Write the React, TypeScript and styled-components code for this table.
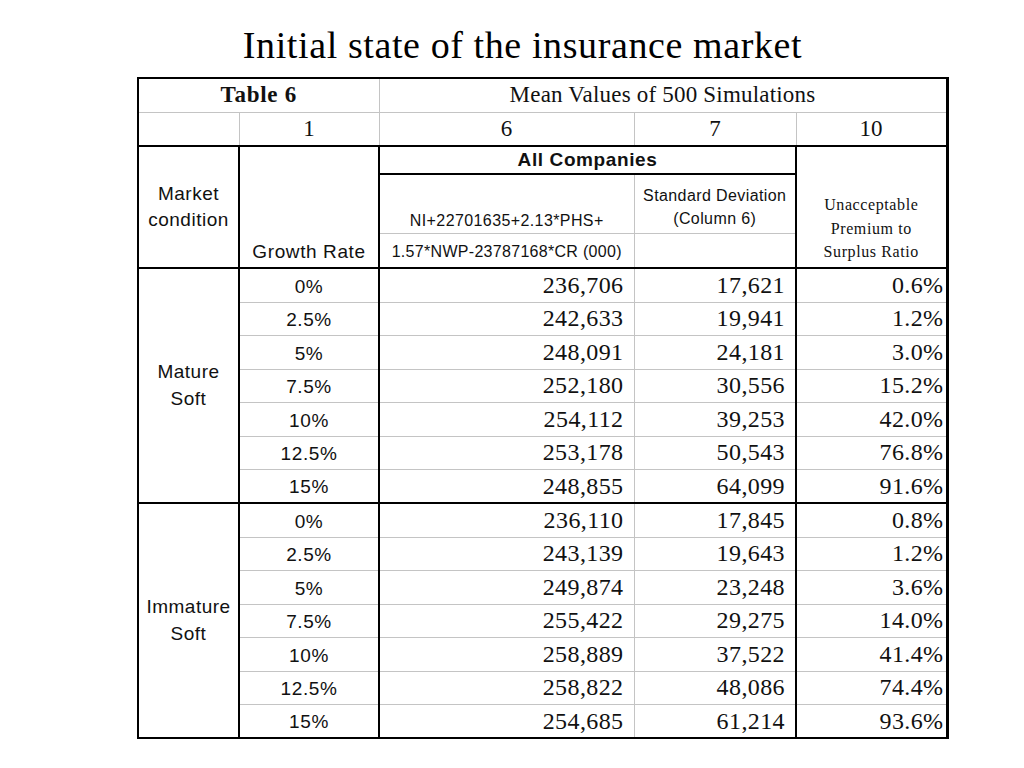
import React from "react";
import styled, { createGlobalStyle, css } from "styled-components";

const GlobalStyle = createGlobalStyle`
  html, body { margin: 0; padding: 0; background: #ffffff; }
  body { width: 1024px; height: 768px; overflow: hidden; }
`;

const Page = styled.main`
  display: flex;
  flex-direction: column;
  padding: 23px 0 0 0;
  width: 1024px;
  box-sizing: border-box;
`;

const Title = styled.h1`
  margin: 0 0 10px 0;
  padding-left: 21px;
  text-align: center;
  font-family: "Liberation Serif", "Times New Roman", serif;
  font-weight: normal;
  font-size: 38px;
  line-height: 44px;
  letter-spacing: 0.6px;
  color: #000;
`;

const Grid = styled.table`
  margin-left: 137px;
  width: 809px;
  border-collapse: collapse;
  table-layout: fixed;
  border-top: 2px solid #000;
  border-left: 2px solid #000;
  border-bottom: 2px solid #000;
  border-right: 3px solid #000;
  color: #111;
`;

const Row = styled.tr<{ $h: number }>`
  height: ${(p) => p.$h}px;
`;

type CellProps = {
  $font?: "serif" | "sans";
  $size?: number;
  $bold?: boolean;
  $align?: "left" | "center" | "right";
  $valign?: "top" | "middle" | "bottom";
  $pr?: number;
  $pb?: number;
  $ls?: number;
  $lh?: number;
  $tl?: boolean;
  $tr?: boolean;
  $tt?: boolean;
  $tb?: boolean;
};

const thick = "2px solid #000";

const Cell = styled.td<CellProps>`
  border: 1px solid #c4c4c4;
  padding: 0 ${(p) => p.$pr ?? 0}px ${(p) => p.$pb ?? 3}px 0;
  font-family: ${(p) =>
    p.$font === "sans"
      ? `"Liberation Sans", Arial, sans-serif`
      : `"Liberation Serif", "Times New Roman", serif`};
  font-size: ${(p) => p.$size ?? 24}px;
  font-weight: ${(p) => (p.$bold ? 700 : 400)};
  letter-spacing: ${(p) => p.$ls ?? 0}px;
  line-height: ${(p) => p.$lh ?? 1.1};
  text-align: ${(p) => p.$align ?? "center"};
  vertical-align: ${(p) => p.$valign ?? "bottom"};
  white-space: nowrap;
  ${(p) => p.$tl && css`border-left: ${thick};`}
  ${(p) => p.$tr && css`border-right: ${thick};`}
  ${(p) => p.$tt && css`border-top: ${thick};`}
  ${(p) => p.$tb && css`border-bottom: ${thick};`}
`;

const Stack = styled.div`
  display: flex;
  flex-direction: column;
  align-items: center;
`;

type DataRow = { g: string; a: string; b: string; c: string };

const mature: DataRow[] = [
  { g: "0%", a: "236,706", b: "17,621", c: "0.6%" },
  { g: "2.5%", a: "242,633", b: "19,941", c: "1.2%" },
  { g: "5%", a: "248,091", b: "24,181", c: "3.0%" },
  { g: "7.5%", a: "252,180", b: "30,556", c: "15.2%" },
  { g: "10%", a: "254,112", b: "39,253", c: "42.0%" },
  { g: "12.5%", a: "253,178", b: "50,543", c: "76.8%" },
  { g: "15%", a: "248,855", b: "64,099", c: "91.6%" },
];

const immature: DataRow[] = [
  { g: "0%", a: "236,110", b: "17,845", c: "0.8%" },
  { g: "2.5%", a: "243,139", b: "19,643", c: "1.2%" },
  { g: "5%", a: "249,874", b: "23,248", c: "3.6%" },
  { g: "7.5%", a: "255,422", b: "29,275", c: "14.0%" },
  { g: "10%", a: "258,889", b: "37,522", c: "41.4%" },
  { g: "12.5%", a: "258,822", b: "48,086", c: "74.4%" },
  { g: "15%", a: "254,685", b: "61,214", c: "93.6%" },
];

const rowHeights = [34, 33, 34, 33, 34, 33, 34];

function Group({ label, rows }: { label: [string, string]; rows: DataRow[] }) {
  return (
    <>
      {rows.map((r, i) => {
        const last = i === rows.length - 1;
        return (
          <Row key={r.g} $h={rowHeights[i]}>
            {i === 0 && (
              <Cell
                rowSpan={rows.length}
                $font="sans"
                $size={19}
                $ls={0.5}
                $lh={1.37}
                $valign="middle"
                $pb={0}
                $tr
                $tb
              >
                <Stack>
                  <span>{label[0]}</span>
                  <span>{label[1]}</span>
                </Stack>
              </Cell>
            )}
            <Cell $font="sans" $size={19} $ls={0.6} $pb={4} $tr $tb={last}>
              {r.g}
            </Cell>
            <Cell $align="right" $pr={10} $ls={0.4} $tb={last}>
              {r.a}
            </Cell>
            <Cell $align="right" $pr={10} $ls={0.4} $tr $tb={last}>
              {r.b}
            </Cell>
            <Cell $align="right" $pr={2} $ls={0.4} $tb={last}>
              {r.c}
            </Cell>
          </Row>
        );
      })}
    </>
  );
}

export default function App() {
  return (
    <>
      <GlobalStyle />
      <Page>
        <Title>Initial state of the insurance market</Title>
        <Grid>
          <colgroup>
            <col style={{ width: 101 }} />
            <col style={{ width: 140 }} />
            <col style={{ width: 255 }} />
            <col style={{ width: 162 }} />
            <col style={{ width: 151 }} />
          </colgroup>
          <tbody>
            <Row $h={34}>
              <Cell colSpan={2} $bold $size={23} $ls={0.7} $pb={4}>
                Table 6
              </Cell>
              <Cell colSpan={3} $size={23} $ls={0.2} $pb={4}>
                Mean Values of 500 Simulations
              </Cell>
            </Row>
            <Row $h={34}>
              <Cell $tb />
              <Cell $size={23} $tb $pb={4}>
                1
              </Cell>
              <Cell $size={23} $tb $pb={4}>
                6
              </Cell>
              <Cell $size={23} $tb $pb={4}>
                7
              </Cell>
              <Cell $size={23} $tb $pb={4}>
                10
              </Cell>
            </Row>
            <Row $h={28}>
              <Cell
                rowSpan={3}
                $font="sans"
                $size={19}
                $ls={0.5}
                $lh={1.37}
                $valign="middle"
                $pb={0}
                $tr
                $tb
              >
                <Stack>
                  <span>Market</span>
                  <span>condition</span>
                </Stack>
              </Cell>
              <Cell rowSpan={3} $font="sans" $size={19} $ls={0.6} $pb={4} $tr $tb>
                Growth Rate
              </Cell>
              <Cell colSpan={2} $font="sans" $bold $size={19} $ls={0.6} $valign="middle" $pb={0} $tb $tr>
                All Companies
              </Cell>
              <Cell
                rowSpan={3}
                $size={16}
                $ls={0.6}
                $lh={1.45}
                $pb={4}
                $tl
                $tb
              >
                <Stack>
                  <span>Unacceptable</span>
                  <span>Premium to</span>
                  <span>Surplus Ratio</span>
                </Stack>
              </Cell>
            </Row>
            <Row $h={59}>
              <Cell $font="sans" $size={16} $ls={0.4} $pb={3}>
                NI+22701635+2.13*PHS+
              </Cell>
              <Cell $font="sans" $size={16} $ls={0.4} $lh={1.45} $pb={2} $tr>
                <Stack>
                  <span>Standard Deviation</span>
                  <span>(Column 6)</span>
                </Stack>
              </Cell>
            </Row>
            <Row $h={35}>
              <Cell $font="sans" $size={16} $ls={0.3} $pb={6} $tb>
                1.57*NWP-23787168*CR (000)
              </Cell>
              <Cell $tr $tb />
            </Row>
            <Group label={["Mature", "Soft"]} rows={mature} />
            <Group label={["Immature", "Soft"]} rows={immature} />
          </tbody>
        </Grid>
      </Page>
    </>
  );
}
